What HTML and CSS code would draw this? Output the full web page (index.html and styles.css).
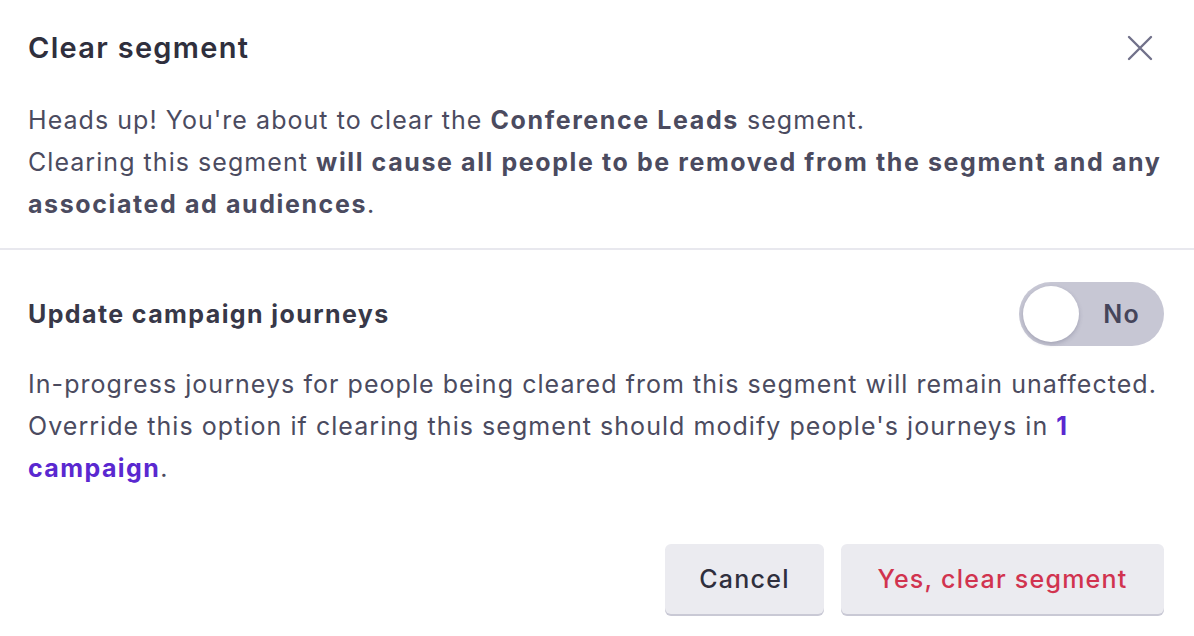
FILE: index.html
```html
<!DOCTYPE html>
<html>
<head>
<meta charset="utf-8">
<link rel="stylesheet" href="styles.css">
</head>
<body>
<div class="modal">
  <div class="header">
    <h1 class="title">Clear segment</h1>
    <button class="close" aria-label="Close">
      <svg width="28" height="28" viewBox="0 0 28 28"><path d="M3 3L25 25M25 3L3 25" stroke="#71718a" stroke-width="2.4" stroke-linecap="round" fill="none"/></svg>
    </button>
  </div>
  <div class="intro">
    <p>Heads up! You're about to clear the <b>Conference Leads</b> segment.<br>Clearing this segment <b>will cause all people to be removed from the segment and any associated ad audiences</b>.</p>
  </div>
  <div class="options">
    <div class="option-row">
      <span class="option-label">Update campaign journeys</span>
      <div class="toggle">
        <span class="knob"></span>
        <span class="toggle-text">No</span>
      </div>
    </div>
    <p class="desc">In-progress journeys for people being cleared from this segment will remain unaffected. Override this option if clearing this segment should modify people's journeys in <a href="#" class="link">1 campaign</a>.</p>
  </div>
  <div class="footer">
    <button class="btn btn-cancel">Cancel</button>
    <button class="btn btn-danger">Yes, clear segment</button>
  </div>
</div>
</body>
</html>
```
FILE: styles.css
```css
html, body {
  margin: 0;
  padding: 0;
  background: #ffffff;
}
body {
  font-family: Inter, "Noto Sans", sans-serif;
  color: #4b4b5f;
  font-size: 25px;
  letter-spacing: 1.05px;
  line-height: 42px;
}
.modal {
  width: 1194px;
  height: 636px;
  display: flex;
  flex-direction: column;
}
.header {
  display: flex;
  align-items: center;
  justify-content: space-between;
  padding: 26px 28px 0 28px;
  height: 44px;
}
.title {
  margin: 0;
  font-size: 29px;
  font-weight: 600;
  letter-spacing: 1.3px;
  color: #2f2f3d;
  line-height: 42px;
}
.close {
  border: none;
  background: none;
  padding: 0;
  width: 28px;
  height: 28px;
  margin-right: 12px;
  cursor: pointer;
}
.close svg {
  display: block;
}
.intro {
  padding: 29px 28px 23px 28px;
  border-bottom: 2px solid #e8e8ee;
}
.intro p, .desc {
  margin: 0;
}
b {
  font-weight: 700;
  letter-spacing: 1.6px;
  color: #4b4b5f;
}
.options {
  padding: 32px 30px 0 28px;
}
.option-row {
  display: flex;
  align-items: center;
  justify-content: space-between;
  height: 64px;
}
.option-label {
  font-weight: 700;
  letter-spacing: 1.4px;
  color: #383848;
}
.toggle {
  width: 145px;
  height: 64px;
  border-radius: 32px;
  background: #c7c7d4;
  display: flex;
  align-items: center;
  box-sizing: border-box;
  padding: 0 24px 0 4px;
  justify-content: space-between;
}
.knob {
  width: 56px;
  height: 56px;
  border-radius: 50%;
  background: #ffffff;
  box-shadow: 0 2px 4px rgba(60, 60, 90, 0.25);
}
.toggle-text {
  font-weight: 600;
  letter-spacing: 1.25px;
  color: #45455a;
}
.desc {
  margin-top: 17px;
}
.link {
  color: #5a28d0;
  font-weight: 700;
  letter-spacing: 1.4px;
  text-decoration: none;
}
.footer {
  display: flex;
  justify-content: flex-end;
  gap: 17px;
  padding: 55px 30px 0 28px;
}
.btn {
  height: 70px;
  border: none;
  border-radius: 6px;
  background: #ebebf0;
  box-shadow: 0 2px 0 #c9c9d5;
  font-family: Inter, "Noto Sans", sans-serif;
  font-size: 25px;
  letter-spacing: 1.25px;
  font-weight: 500;
  padding: 0;
}
.btn-cancel {
  color: #2f2f3d;
  width: 159px;
}
.btn-danger {
  color: #d1334f;
  width: 323px;
}
```
